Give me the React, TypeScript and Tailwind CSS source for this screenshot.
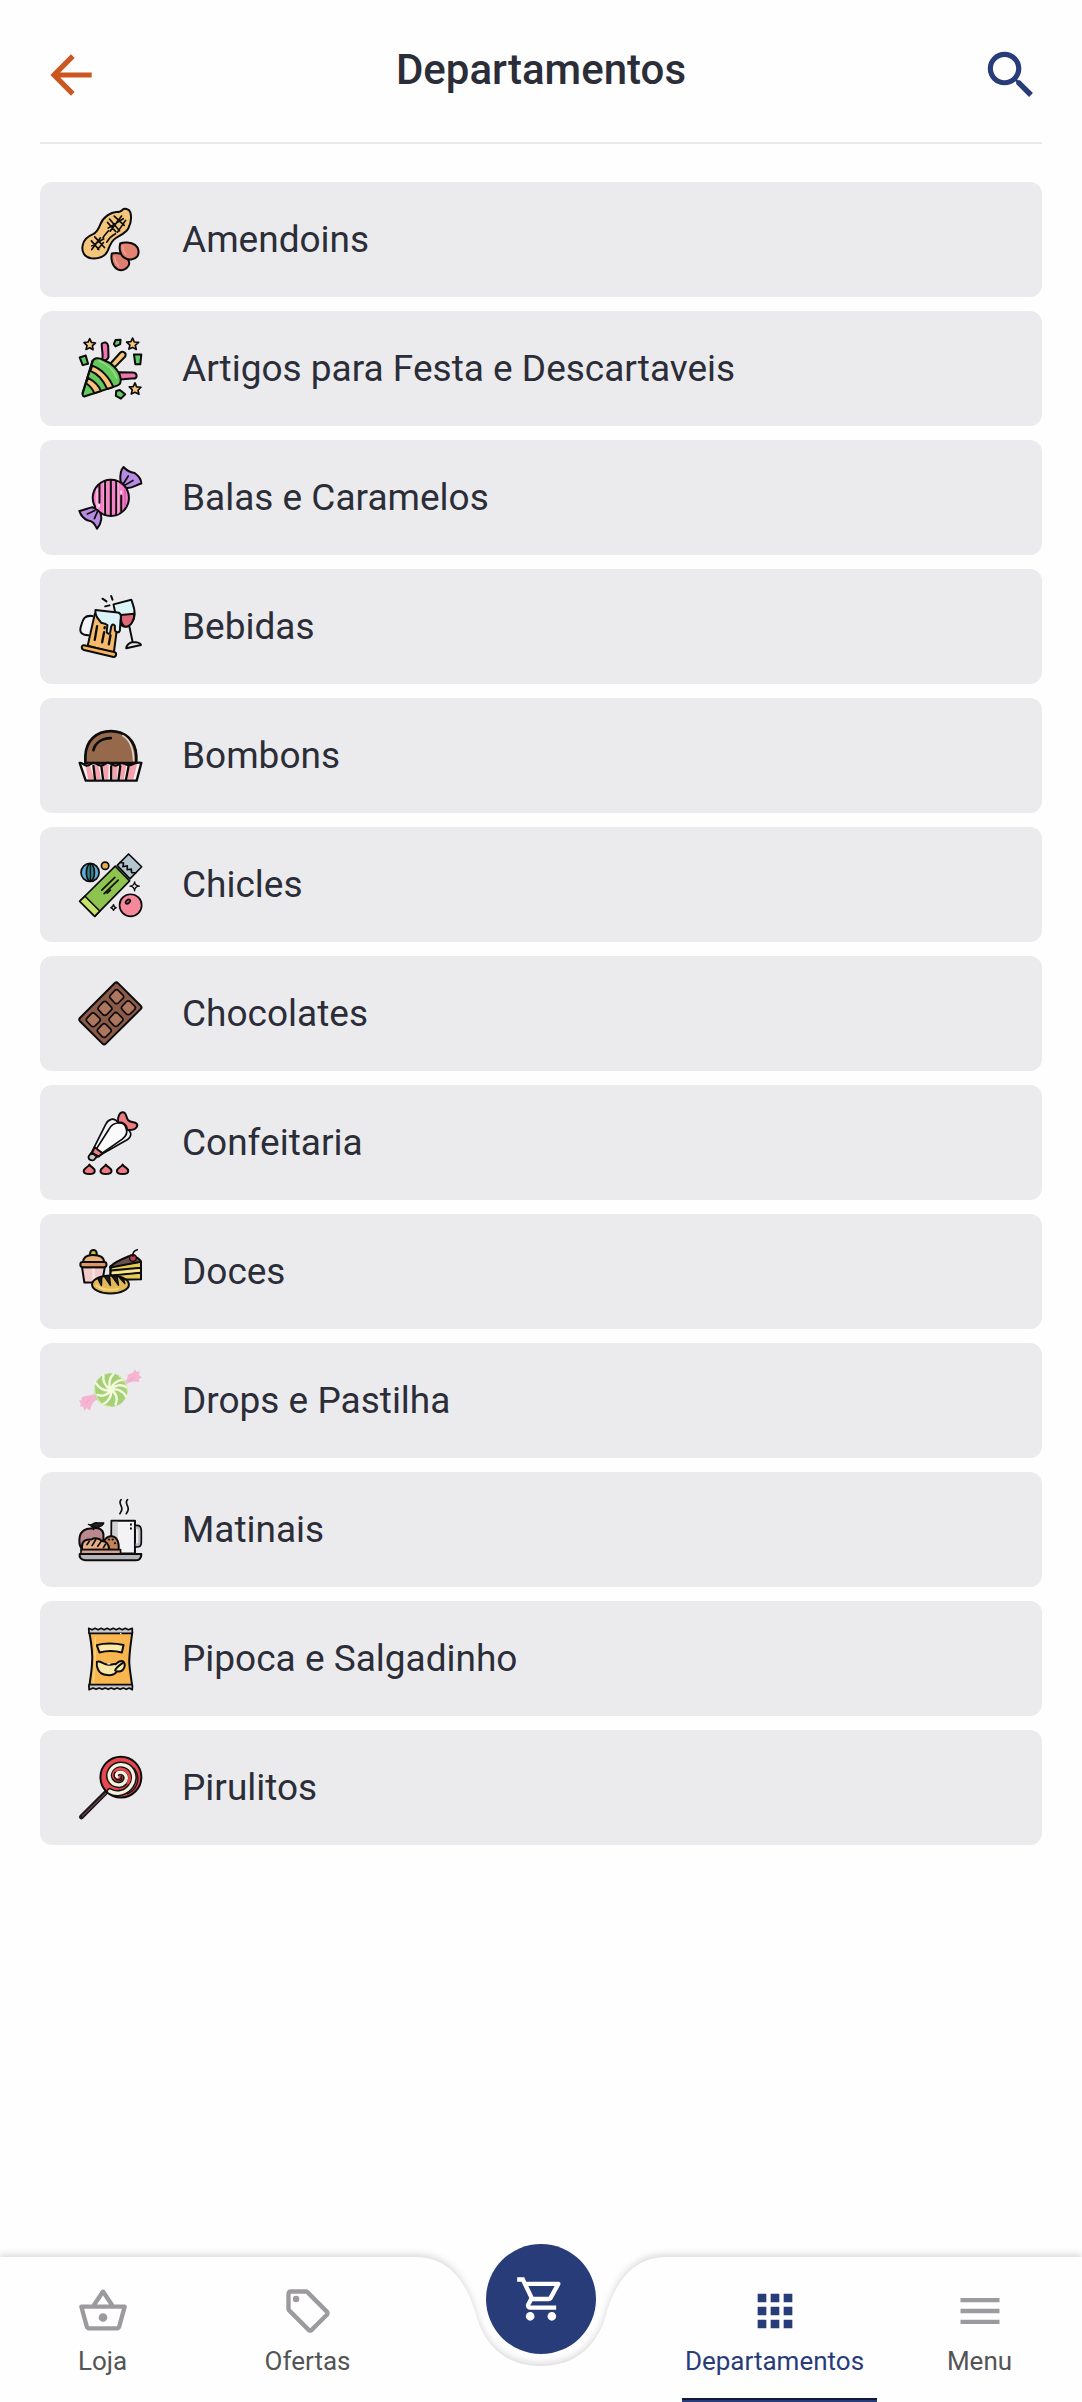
import type { ReactNode } from 'react';
import {
  MdApps,
  MdArrowBack,
  MdMenu,
  MdOutlineLocalOffer,
  MdOutlineShoppingBasket,
  MdOutlineShoppingCart,
  MdSearch,
} from 'react-icons/md';

function Art({ top, children }: { top: number; children: ReactNode }) {
  return (
    <svg
      viewBox={`57 ${top} 188 188`}
      className="size-[63px] shrink-0 overflow-visible"
      fill="none"
      stroke="#0c0c0c"
      strokeWidth="6"
      strokeLinecap="round"
      strokeLinejoin="round"
      aria-hidden="true"
    >
      {children}
    </svg>
  );
}

const Peanut = () => (
  <Art top={60}>
    <path fill="#f3c67c" d="M186 66C192 60 206 62 210 72C215 90 211 108 204 121C195 137 178 141 165 151C152 160 148 175 143 187C134 207 113 212 93 210C73 207 64 190 68 171C71 153 84 144 99 138C112 132 116 121 121 108C130 86 152 73 168 72C176 72 182 71 186 66Z" />
    <path strokeWidth="5" d="M184 84L150 129M196 97L172 132M148 93L178 128M162 84L192 112M142 103L167 131M144 120L189 92M121 149L95 184M130 163L113 183M104 146L133 178M94 158L116 184M95 173L131 152M145 128C138 136 133 141 129 148M166 137C155 143 147 149 140 162" />
    <path fill="#df7f70" d="M155 196C166 193 180 195 190 201C202 209 211 219 205 232C199 243 186 249 172 243C157 235 151 214 155 196Z" />
    <path fill="#e58373" d="M180 166C190 161 212 161 224 170C235 178 238 193 231 204C223 214 205 218 192 208C179 200 176 180 180 166Z" />
    <path stroke="#f0a294" strokeWidth="4" d="M163 206C164 217 169 226 175 233M188 173C187 184 191 193 197 198" />
  </Art>
);

const Party = () => (
  <Art top={445}>
    <path fill="#f9c77b" strokeWidth="5" d="M89 450L94 461L106 463L97 471L99 483L89 477L78 482L81 471L72 462L84 460ZM217 448L222 460L235 461L225 470L228 482L217 476L206 481L209 469L199 460L212 459ZM224 582L229 594L242 595L233 604L236 616L224 610L213 615L216 603L207 594L219 593Z" />
    <path fill="#64c765" d="M59 506L77 500L84 525L68 529ZM166 454L181 453L180 466L166 473L161 466ZM221 497L243 497L240 526L225 526ZM168 606L179 603L195 616L182 629L167 621Z" />
    <path fill="#ee75ad" d="M125 465C132 458 142 461 144 471L145 505C142 513 133 519 126 512C131 497 123 480 125 465ZM177 550L218 551C234 554 231 570 218 569C200 568 190 573 178 571Z" />
    <path fill="#f9c77b" d="M151 524L180 492C187 485 200 493 195 503L164 535Z" />
    <path fill="#65c85c" d="M98 517C102 507 116 506 129 513C154 522 177 544 181 568C183 580 180 587 171 590L75 622C69 624 66 618 68 611Z" />
    <path fill="#f8c27c" d="M96 531C121 538 148 565 159 594L141 600C130 574 111 554 91 546ZM84 567C104 578 117 591 122 606L103 613C97 598 90 591 78 583Z" />
    <path d="M97 516L68 613" />
    <path stroke="#a0df84" strokeWidth="4" d="M117 516C143 526 164 547 169 568" />
  </Art>
);

const Candy = () => (
  <Art top={51}>
    <path fill="#b88be2" d="M181 98C179 80 180 64 190 54C200 66 210 70 223 72C234 80 243 92 243 103C226 107 218 119 197 116Z" />
    <path fill="#b88be2" d="M58 185C72 184 83 176 97 174L119 186C127 202 124 224 111 238C103 223 98 215 82 213C71 208 62 197 58 185Z" />
    <path d="M190 103L204 81M194 108L218 94M112 187L103 208M104 184L82 194" strokeWidth="5" />
    <circle cx="152" cy="146" r="54" fill="#f681c7" />
    <path stroke="#ffb1df" strokeWidth="10" d="M113 122V174M135 102V189M171 104V190" />
    <path d="M118 108V161M135 95V197M152 92V198M168 95V198M183 140V186" />
    <path stroke="#de5fb4" strokeWidth="6" d="M194 121V170" />
    <path stroke="#fff" strokeWidth="4" d="M117 166V172M183 126V132" />
  </Art>
);

const Drinks = () => (
  <Art top={437}>
    <path d="M127 448L139 456M153 440L157 451M135 471L148 468" />
    <path fill="#f2f3f6" d="M97 500C74 496 69 508 63 530C57 548 64 556 85 557" />
    <path fill="#dbf4f6" d="M160 465L213 451C221 473 228 493 218 513C211 526 201 534 188 530C174 523 163 486 160 465Z" />
    <path fill="#df6878" d="M182 497L222 493C223 511 211 531 197 532C185 531 180 514 182 497Z" />
    <path d="M207 530L217 577M198 596C199 583 210 579 218 577C230 577 239 579 242 586Z" />
    <path fill="#f6ba68" d="M104 494L174 509L161 609L83 588Z" />
    <path fill="#f7b45f" d="M72 587L162 607C170 609 170 621 160 622L72 601C62 598 64 586 72 587Z" />
    <path fill="#dcf2fb" d="M106 482L172 489C183 490 183 501 181 512L179 542C177 551 165 550 164 540V529C160 523 155 524 153 532L150 549C147 556 138 552 140 541L142 527C136 521 129 521 123 520C117 510 103 501 106 482Z" />
    <path strokeWidth="7" d="M111 530L104 571M132 548L126 578M133 536L134 533M151 557L146 584" />
  </Art>
);

const Bonbon = () => (
  <Art top={73}>
    <path fill="#96694d" strokeWidth="8" d="M76 190V168C78 123 109 94 152 94C195 94 226 123 228 168V190Z" />
    <path stroke="#e4d2c6" strokeWidth="5" d="M188 108C209 120 219 143 220 182" />
    <path strokeWidth="8" d="M100 151C105 130 124 116 152 115" />
    <path fill="#f4f0f2" stroke="none" d="M59 189L81 197L101 193L121 198L143 192L164 198L185 192L205 197L243 189L229 242H77Z" />
    <path fill="#f6a1ab" stroke="none" d="M77 196L88 190L102 238H84ZM102 196L114 191L123 238H107ZM128 195L146 194L144 238H133ZM156 194L173 194L170 238H159ZM181 195L199 191L191 238H180ZM209 194L231 191L219 238H201Z" />
    <path strokeWidth="7" d="M59 189C68 187 73 198 79 197C90 198 92 188 101 189C109 189 115 198 122 197C134 197 134 188 144 189C154 189 158 198 166 197C176 197 180 188 187 190C198 190 200 198 209 196C218 194 225 186 243 189L229 242H77ZM100 198L105 240M124 200L129 240M153 199V240M180 199L175 240M205 199L197 240" />
  </Art>
);

const Gum = () => (
  <Art top={458}>
    <circle cx="90" cy="516" r="27" fill="#5fabd4" strokeWidth="5" />
    <ellipse cx="91" cy="516" rx="12" ry="26" fill="#33848b" strokeWidth="5" />
    <path d="M91 491V541" strokeWidth="4" />
    <circle cx="135" cy="496" r="11" fill="#e6aa50" strokeWidth="5" />
    <path fill="#b3c5ce" strokeWidth="5" d="M171 495L205 461L244 499L209 535Z" />
    <path strokeWidth="5" d="M180 486L190 488L188 499L201 496L201 508L213 506L214 517L226 517" />
    <path fill="#8dc450" strokeWidth="5" d="M59 602L165 497L208 541L104 647Z" />
    <path fill="#c6e36c" strokeWidth="5" d="M59 602L75 587L119 631L104 647Z" />
    <path strokeWidth="5" d="M125 569L164 531M132 579L174 539M141 578L151 569" />
    <circle cx="211" cy="614" r="33" fill="#f5889a" strokeWidth="5" />
    <ellipse cx="203" cy="603" rx="8" ry="5" transform="rotate(-42 203 603)" fill="#b95b70" strokeWidth="5" />
    <path strokeWidth="4" d="M223 544Q223 556 237 557Q223 558 223 571Q222 558 209 557Q222 556 223 544ZM160 612L163 619L168 621L163 624L160 629L157 624L152 621L157 618Z" />
  </Art>
);

const Chocolate = () => (
  <Art top={65}>
    <path fill="#8b5a49" d="M59 173L164 68Q169 64 174 69L241 136Q246 141 241 146L137 249Q132 254 127 249L60 182Q56 177 59 173Z" />
    <g fill="#ad765e" strokeWidth="5">
      <path d="M163 91Q169 85 175 91L188 104Q193 109 188 114L175 127Q169 132 163 127L151 114Q146 109 151 104Z" />
      <path d="M128 126Q134 120 140 126L153 139Q158 144 153 149L140 162Q134 167 128 162L116 149Q111 144 116 139Z" />
      <path d="M93 160Q99 154 105 160L118 173Q123 178 118 183L105 196Q99 201 93 196L81 183Q76 178 81 173Z" />
      <path d="M198 124Q204 118 210 124L223 137Q228 142 223 147L210 160Q204 165 198 160L186 147Q181 142 186 137Z" />
      <path d="M161 159Q167 153 173 159L186 172Q191 177 186 182L173 195Q167 200 161 195L149 182Q144 177 149 172Z" />
      <path d="M126 192Q132 186 138 192L151 205Q156 210 151 215L138 228Q132 233 126 228L114 215Q109 210 114 205Z" />
    </g>
  </Art>
);

const PipingBag = () => (
  <Art top={450}>
    <path fill="#f3f3f5" strokeWidth="5" d="M174 484C161 468 144 474 137 489L95 573L86 586C84 595 98 601 104 592L114 585L202 535C213 527 214 517 207 509Z" />
    <path fill="#fafafa" strokeWidth="5" d="M177 485C164 486 152 492 146 505L109 563L126 576L186 534C198 525 202 515 198 503C195 491 188 485 177 485Z" />
    <path fill="#ef7b81" d="M174 484C171 468 178 452 190 454C200 457 197 471 204 478C214 486 231 482 231 492C229 505 214 508 201 506C200 493 190 483 174 484Z" />
    <path fill="#ef7b81" d="M104 558L127 576L116 586L96 575Z" />
    <path fill="#c7c7ca" strokeWidth="5" d="M94 575L110 586L103 595C95 601 83 594 86 585Z" />
    <path fill="#ef7b81" d="M88 610C94 619 104 620 104 629C104 637 96 638 88 638C78 638 71 637 71 629C72 620 83 619 88 610ZM137 610C143 619 154 620 154 629C154 637 146 638 137 638C128 638 121 637 121 629C121 620 132 619 137 610ZM187 610C193 619 204 620 204 629C204 637 196 638 187 638C178 638 170 637 170 629C170 620 182 619 187 610Z" />
  </Art>
);

const Sweets = () => (
  <Art top={57}>
    <circle cx="100" cy="97" r="10" fill="#c4b641" />
    <path fill="#e9b27b" d="M69 124C70 106 82 102 98 102C117 102 132 108 132 124Z" />
    <path fill="#f2caca" d="M66 138L73 184H126L134 138Z" />
    <path fill="none" stroke="#fae7e5" strokeWidth="7" d="M100 145L101 177" />
    <rect x="61" y="123" width="78" height="15" rx="7" fill="#df9861" />
    <path fill="#e7cb58" d="M151 136L242 121V174L151 176Z" />
    <path fill="#6a504b" d="M151 136C165 121 193 111 212 103C229 106 238 113 242 122L151 139Z" />
    <path d="M151 148L240 140M151 163L240 155M151 136V171M242 122V174" />
    <path stroke="#f3e99b" strokeWidth="6" d="M157 156L236 148" />
    <circle cx="218" cy="111" r="10" fill="#c43d4c" strokeWidth="4" />
    <path strokeWidth="5" d="M218 105C217 95 222 88 231 86" />
    <ellipse cx="151" cy="190" rx="55" ry="27" fill="#e1b958" />
    <path stroke="#f5d477" strokeWidth="6" d="M109 193C125 206 151 209 173 202" />
    <path fill="#221c19" strokeWidth="4" d="M112 170L124 193L125 167ZM132 165L151 193L148 164ZM155 165L175 192L171 167ZM178 170L194 187L190 173Z" />
  </Art>
);

const Mint = () => (
  <Art top={443}>
    <g stroke="none">
      <path fill="#f4b4d2" d="M192 481C203 474 203 465 202 461L219 453L223 445L231 452L240 450L235 460L245 468L236 472L237 482L225 480C213 480 208 483 198 488ZM108 519C99 517 89 524 72 524L64 529L66 537L57 536L62 547L61 556L69 555L73 567L80 560L90 567L93 555C98 545 99 539 112 534Z" />
      <circle cx="152" cy="506" r="50" fill="#a5d077" />
    </g>
    <g stroke="#f3fbdc" strokeWidth="7">
      <path d="M152 506C137 496 126 479 130 463M152 506C144 490 147 469 160 458M152 506C154 489 171 476 189 475M152 506C163 490 185 487 199 498M152 506C169 500 189 508 197 525M152 506C168 513 174 531 166 549M152 506C156 523 145 541 128 549M152 506C143 522 125 526 112 520M152 506C132 511 115 498 108 486" />
    </g>
    <path stroke="#d8efb4" strokeWidth="3" d="M104 493C101 529 124 555 151 555M176 464C193 475 202 493 201 510" />
    <path stroke="#e79fc5" strokeWidth="2" d="M207 478L220 469M88 535L75 546" />
  </Art>
);

const Breakfast = () => (
  <Art top={49}>
    <path d="M183 54C173 62 185 72 185 81C185 89 180 92 179 96M202 54C192 62 204 72 204 81C204 89 200 92 198 96" strokeWidth="5" />
    <path fill="#f3f3f5" d="M154 117H224V215H153Z" />
    <path fill="#d1d1d4" stroke="none" d="M157 120H173V211H157Z" />
    <path fill="#b9bac1" stroke="none" d="M227 132C239 130 243 136 243 147V181C243 192 239 196 226 195V185C234 185 234 182 234 177V149C234 143 232 141 226 141Z" />
    <path d="M227 131C239 130 243 136 243 147V181C243 192 239 196 226 195" strokeWidth="5" />
    <path d="M212 127V129M212 139V141" strokeWidth="6" />
    <path fill="#bc888f" d="M59 165C62 148 77 138 96 140C114 135 129 142 130 158V200H64C58 190 57 177 59 165Z" />
    <path fill="#222" strokeWidth="4" d="M85 128C96 133 98 121 113 123L131 123C126 138 109 139 96 133C99 136 100 139 101 143" />
    <path fill="#c38359" d="M129 203C126 178 138 163 153 163C168 163 178 178 175 204Z" />
    <path d="M146 173H147M157 173H158M164 184H165" strokeWidth="6" />
    <path fill="#e8ad83" d="M66 204V191C67 176 81 171 94 173C104 165 121 172 124 177C137 176 147 187 147 203Z" />
    <path d="M81 188L88 178M96 191L107 173M113 193L124 177M130 197L136 187" strokeWidth="5" />
    <rect x="63" y="203" width="118" height="13" fill="#d0a092" strokeWidth="5" />
    <path fill="#b5b6bb" d="M59 216H243C244 230 235 235 225 235H76C64 234 57 227 59 216Z" />
  </Art>
);

const Snack = () => (
  <Art top={434}>
    <path fill="#f9b64f" d="M88 450C95 489 99 512 96 540C95 569 90 588 88 613L216 613C213 587 208 563 207 540C207 507 212 482 216 450Z" />
    <path fill="#c9c9cc" strokeWidth="5" d="M86 438L96 442L105 438L114 442L123 438L132 442L141 438L150 442L159 438L168 442L177 438L186 442L195 438L204 442L216 438V453H87ZM87 606H216V621L207 616L198 620L189 616L180 620L171 616L162 620L153 616L144 620L135 616L126 620L117 616L108 620L99 616L87 621Z" />
    <path fill="#fae9a7" d="M110 488C132 482 167 482 190 488L185 510C163 504 140 504 118 510Z" />
    <path fill="#f8e8a3" d="M110 538C119 533 125 542 137 545C149 551 158 542 166 545C174 538 184 533 190 538C199 550 188 571 170 566C160 584 122 580 114 561C110 554 109 546 110 538Z" />
    <path d="M165 564C165 556 182 545 189 540" />
    <path stroke="#fcd074" strokeWidth="5" d="M105 466C105 526 107 555 99 599" />
    <path stroke="#fff" strokeWidth="4" d="M181 454H182M143 544H149" />
  </Art>
);

const Lollipop = () => (
  <Art top={40}>
    <path stroke="#1d171a" strokeWidth="14" d="M141 145L64 222" />
    <path stroke="#634049" strokeWidth="4" d="M136 152L67 219" />
    <circle cx="182" cy="103" r="61" fill="#e94750" strokeWidth="6" />
    <path stroke="#151416" strokeWidth="19" d="M177 106C170 107 166 100 169 94C175 84 193 88 197 99C202 115 188 129 173 126C151 124 143 103 149 88C157 68 177 62 195 68C221 77 227 108 212 129C199 149 171 158 149 145" />
    <path stroke="#f4f1dc" strokeWidth="10" d="M177 106C170 107 166 100 169 94C175 84 193 88 197 99C202 115 188 129 173 126C151 124 143 103 149 88C157 68 177 62 195 68C221 77 227 108 212 129C199 149 171 158 149 145" />
    <path stroke="#e94750" strokeWidth="8" d="M180 101C181 110 168 115 161 103C155 88 171 75 185 79C207 84 213 105 203 121" />
    <path stroke="#151416" strokeWidth="4" d="M183 100C184 108 175 114 168 109C160 104 160 95 165 88M221 76C243 104 232 139 202 153" />
  </Art>
);

const departments = [
  { name: 'Amendoins', Icon: Peanut },
  { name: 'Artigos para Festa e Descartaveis', Icon: Party },
  { name: 'Balas e Caramelos', Icon: Candy },
  { name: 'Bebidas', Icon: Drinks },
  { name: 'Bombons', Icon: Bonbon },
  { name: 'Chicles', Icon: Gum },
  { name: 'Chocolates', Icon: Chocolate },
  { name: 'Confeitaria', Icon: PipingBag },
  { name: 'Doces', Icon: Sweets },
  { name: 'Drops e Pastilha', Icon: Mint },
  { name: 'Matinais', Icon: Breakfast },
  { name: 'Pipoca e Salgadinho', Icon: Snack },
  { name: 'Pirulitos', Icon: Lollipop },
];

function NavItem({ label, icon, active = false }: { label: string; icon: ReactNode; active?: boolean }) {
  return (
    <a
      href="#"
      aria-current={active ? 'page' : undefined}
      className={
        active
          ? 'relative flex flex-1 flex-col items-center pt-7 text-[#293c7a]'
          : 'relative flex flex-1 flex-col items-center pt-7 text-[#9c9a9e]'
      }
    >
      {icon}
      <span className={active ? 'mt-2 text-[26px] leading-8' : 'mt-2 text-[26px] leading-8 text-[#545454]'}>{label}</span>
      {active && <span className="absolute right-0 bottom-0 left-[10px] h-1 border-t-2 border-[#11183c] bg-[#293c7a]" />}
    </a>
  );
}

function BottomNav() {
  return (
    <nav aria-label="Principal" className="relative flex h-[145px]">
      <div className="absolute inset-0 flex drop-shadow-[0_-3px_3px_rgba(60,40,60,0.16)]">
        <div className="flex-1 bg-[#fefefe]" />
        <svg viewBox="0 0 262 145" className="-mx-px h-[145px] w-[264px] shrink-0" preserveAspectRatio="none" aria-hidden="true">
          <path fill="#fefefe" d="M0 0H6C38 0 56 22 66 56C74 88 96 109 131 109C166 109 188 88 196 56C206 22 224 0 256 0H262V145H0Z" />
        </svg>
        <div className="flex-1 bg-[#fefefe]" />
      </div>
      <NavItem label="Loja" icon={<MdOutlineShoppingBasket className="size-[52px]" />} />
      <NavItem label="Ofertas" icon={<MdOutlineLocalOffer className="size-[52px]" />} />
      <div className="relative flex w-[262px] shrink-0 justify-center">
        <button
          type="button"
          aria-label="Carrinho"
          className="-mt-[13px] flex size-[110px] items-center justify-center rounded-full bg-[#293c7a] text-white"
        >
          <MdOutlineShoppingCart className="size-[52px]" />
        </button>
      </div>
      <NavItem label="Departamentos" active icon={<MdApps className="size-[52px]" />} />
      <NavItem label="Menu" icon={<MdMenu className="size-[52px]" />} />
    </nav>
  );
}

export default function App() {
  return (
    <div className="flex min-h-screen flex-col bg-[#fefefe] font-[Roboto,sans-serif] text-[#2b2d38]">
      <header className="mx-10 flex h-36 items-start justify-between border-b-2 border-[#e8e8ed] pt-11">
        <button type="button" aria-label="Voltar" className="text-[#cb5622]">
          <MdArrowBack className="size-[62px]" />
        </button>
        <h1 className="text-[42px] leading-[52px] font-medium">Departamentos</h1>
        <button type="button" aria-label="Buscar" className="text-[#293c7a]">
          <MdSearch className="size-[62px]" />
        </button>
      </header>
      <main className="flex-1 px-10 pt-[38px]">
        <ul className="flex flex-col gap-3.5">
          {departments.map(({ name, Icon }) => (
            <li key={name}>
              <a href="#" className="flex h-[115px] items-center gap-10 rounded-xl bg-[#ebebed] px-[39px] text-[37px] leading-[44px]">
                <Icon />
                {name}
              </a>
            </li>
          ))}
        </ul>
      </main>
      <BottomNav />
    </div>
  );
}
